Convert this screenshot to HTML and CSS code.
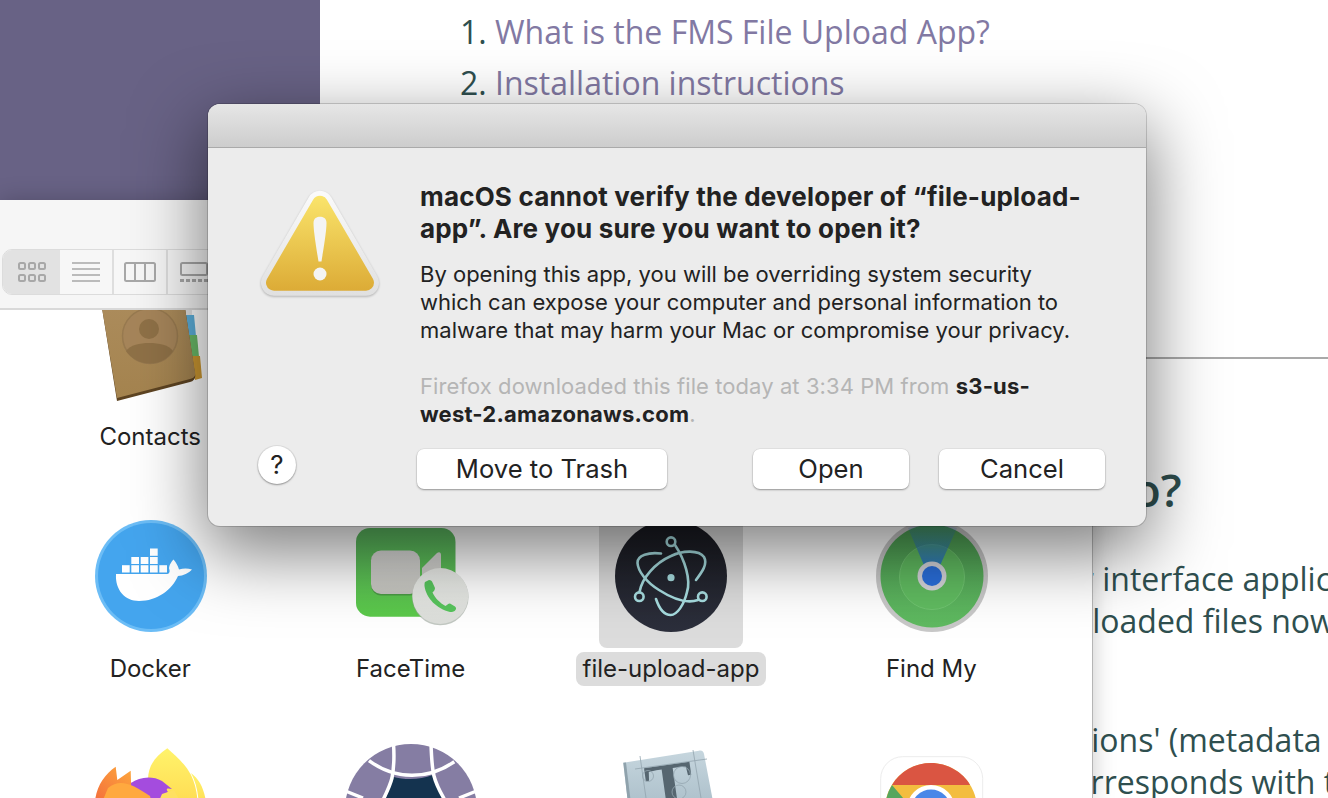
FILE: index.html
```html
<!DOCTYPE html>
<html>
	<head>
		<meta charset="utf-8">
		<title>macOS cannot verify the developer</title>
		<link rel="stylesheet" href="styles.css">
	</head>
	<body>
		<div class="desktop">
			<!-- browser window behind -->
			<div class="page">
				<div class="sidebar"></div>
				<div class="article">
					<ol class="toc">
						<li><a>What is the FMS File Upload App?</a></li>
						<li><a>Installation instructions</a></li>
					</ol>
					<div class="rule"></div>
					<h2>do?</h2>
					<p class="para1">
						<span class="line l1">user interface application</span>
						<span class="line l2">uploaded files now</span>
					</p>
					<p class="para2">
						<span class="line l3">descriptions' (metadata</span>
						<span class="line l4">corresponds with the</span>
					</p>
				</div>
			</div>

			<!-- finder window -->
			<div class="finder">
				<div class="toolbar">
					<div class="segments">
						<div class="seg active">
							<svg width="28" height="20" viewBox="0 0 28 20" fill="none" stroke="#a8a8a8" stroke-width="2"><rect x="1" y="1" width="6" height="6" rx="1.5"/><rect x="11" y="1" width="6" height="6" rx="1.5"/><rect x="21" y="1" width="6" height="6" rx="1.5"/><rect x="1" y="13" width="6" height="6" rx="1.5"/><rect x="11" y="13" width="6" height="6" rx="1.5"/><rect x="21" y="13" width="6" height="6" rx="1.5"/></svg>
						</div>
						<div class="seg">
							<svg width="28" height="20" viewBox="0 0 28 20" stroke="#a8a8a8" stroke-width="1.6"><path d="M0 1H28M0 7H28M0 13H28M0 19H28"/></svg>
						</div>
						<div class="seg">
							<svg width="32" height="20" viewBox="0 0 32 20" fill="none" stroke="#a8a8a8" stroke-width="2"><rect x="1" y="1" width="30" height="18" rx="1.5"/><path d="M11 1V19M21 1V19"/></svg>
						</div>
						<div class="seg">
							<svg width="28" height="20" viewBox="0 0 28 20" fill="none" stroke="#a8a8a8" stroke-width="2"><rect x="1" y="1" width="26" height="12" rx="1.5"/><path d="M0 18.500H28" stroke-width="3" stroke-dasharray="4 2"/></svg>
						</div>
					</div>
				</div>
				<div class="files">
					<div class="file-grid">
						<div class="app">
							<div class="tile">
								<svg class="icon" viewBox="0 0 112 112">
									<defs><linearGradient id="book" x1="0" y1="0" x2="0" y2="1"><stop offset="0" stop-color="#ab8b5b"/><stop offset="1" stop-color="#a5844f"/></linearGradient></defs>
									<rect x="90" y="20" width="8" height="8" fill="#e4e4e4"/>
									<path d="M90 27H100L102 48H92Z" fill="#5db1dd"/>
									<path d="M93 47H103L105 69H96Z" fill="#6cbd6a"/>
									<path d="M96 68H106L108 90L101 92Z" fill="#cf9a32"/>
									<path d="M8 20H91L101 86C102 90 100 93 96 94L23 113Z" fill="#5e4422"/>
									<path d="M8 20H91L101 84C102 88 100 90 96 91L23 110Z" fill="url(#book)"/>
									<circle cx="56" cy="48" r="27.500" fill="#a6855a" stroke="#987a50" stroke-width="1.500"/>
									<circle cx="55" cy="41" r="10" fill="#8f7147"/>
									<path d="M32 63C36 57 46 55 55 55C65 55 75 57 79 63C74 71 65 75.500 56 75.500C47 75.500 37 71 32 63Z" fill="#8f7147"/>
								</svg>
							</div>
							<span class="label">Contacts</span>
						</div>
						<div class="app"></div>
						<div class="app"></div>
						<div class="app"></div>

						<div class="app">
							<div class="tile">
								<svg class="icon" viewBox="-1 0 112 112">
									<circle cx="56" cy="56" r="56" fill="#6cbdf6"/>
									<circle cx="56" cy="56" r="53" fill="#44a5ee"/>
									<g fill="#fff">
										<rect x="55" y="28.500" width="7.700" height="7.300"/>
										<rect x="36.300" y="37" width="7.700" height="7"/>
										<rect x="45.700" y="37" width="7.700" height="7"/>
										<rect x="55" y="37" width="7.700" height="7"/>
										<rect x="27" y="45.200" width="7.700" height="7.300"/>
										<rect x="36.300" y="45.200" width="7.700" height="7.300"/>
										<rect x="45.700" y="45.200" width="7.700" height="7.300"/>
										<rect x="55" y="45.200" width="7.700" height="7.300"/>
										<rect x="64.300" y="45.200" width="7.700" height="7.300"/>
										<path d="M21 54H72C74 54 75 52 74.500 50C73 47 76 42 78.500 39.500C81 42 83 46 84 49.500C88 48 93 48 97 49.500C94 53 88 56 83 56C77 70 62 81 44 81C30 81 20 70 21 54Z"/>
									</g>
								</svg>
							</div>
							<span class="label">Docker</span>
						</div>
						<div class="app">
							<div class="tile">
								<svg class="icon" viewBox="0 0 112 112">
									<defs>
										<linearGradient id="ftGreen" x1="0" y1="0" x2="0" y2="1"><stop offset="0" stop-color="#5cb861"/><stop offset="1" stop-color="#5bc94a"/></linearGradient>
										<linearGradient id="ftCam" x1="0" y1="0" x2="0" y2="1"><stop offset="0" stop-color="#dcdcda"/><stop offset="1" stop-color="#c4c4be"/></linearGradient>
										<linearGradient id="ftDisc" x1="0" y1="0" x2="0" y2="1"><stop offset="0" stop-color="#eceeea"/><stop offset="1" stop-color="#dcdeda"/></linearGradient>
									</defs>
									<rect x="1" y="8" width="99.500" height="88.700" rx="14" fill="url(#ftGreen)"/>
									<rect x="16" y="31.500" width="49" height="44" rx="10" fill="#3f7f3d" opacity=".6"/>
									<rect x="16" y="30.500" width="49" height="43.500" rx="10" fill="url(#ftCam)"/>
									<path d="M67 48L82 33C84 31.500 86 32 86 35V70H67Z" fill="url(#ftCam)"/>
									<circle cx="85.300" cy="77" r="28.300" fill="#9aa39a" opacity=".6"/>
									<circle cx="85.300" cy="76" r="28" fill="url(#ftDisc)"/>
									<path d="M70 62L74 60C76 60 77 61 77.500 62.500L80 68C80 70 79 71 77.500 72.500C80 78 85 83 90.500 86C92 85 93 83.500 95 83.500L100 86.500C101 87.500 101.500 88.500 100.500 90C99.500 91.500 98 92 95 92C82 89 71 78 69.500 66C69.500 64.500 69.500 63 70 62Z" fill="#57c45c"/>
								</svg>
							</div>
							<span class="label">FaceTime</span>
						</div>
						<div class="app selected">
							<div class="tile">
								<svg class="icon" viewBox="0 0 112 112">
									<defs><linearGradient id="elec" x1="0" y1="0" x2="0" y2="1"><stop offset="0" stop-color="#191a20"/><stop offset="1" stop-color="#2c2f3c"/></linearGradient></defs>
									<circle cx="56" cy="56" r="56" fill="url(#elec)"/>
									<g fill="none" stroke="#a7dde0" stroke-width="2.600" stroke-linecap="round">
										<path d="M60 25C70 40 76 60 72 72C69 85 62 95 55.700 95C49 95 44 88 41 79"/>
										<path d="M46 33.500C34 32 22 35 22.500 43C23 51 31 62 44 70C58 79 72 84 83 80"/>
										<path d="M24.500 72C27 58 40 43 56 36C68 30 84 30 89 37C93 44 87 52 81 60"/>
										<circle cx="56" cy="21.700" r="4.300"/>
										<circle cx="24.300" cy="76.700" r="4.300"/>
										<circle cx="87.300" cy="76.700" r="4.300"/>
									</g>
									<circle cx="56" cy="57.700" r="3.600" fill="#a7dde0"/>
								</svg>
							</div>
							<span class="label">file-upload-app</span>
						</div>
						<div class="app">
							<div class="tile">
								<svg class="icon" viewBox="-1 0 112 112">
									<defs>
										<linearGradient id="fmGreen" x1="0" y1="0" x2="0" y2="1"><stop offset="0" stop-color="#4f9f55"/><stop offset="1" stop-color="#5fba60"/></linearGradient>
										<linearGradient id="fmBeam" x1="0" y1="0" x2="0" y2="1"><stop offset="0" stop-color="#2a74c5" stop-opacity=".1"/><stop offset="1" stop-color="#2a74c5"/></linearGradient>
									</defs>
									<circle cx="56" cy="56" r="56" fill="#c8c8c8"/>
									<circle cx="56" cy="56" r="51.500" fill="url(#fmGreen)"/>
									<circle cx="56" cy="57" r="32.500" fill="#60bb60" stroke="#70c470" stroke-width="1"/>
									<path d="M32 8C47 2 65 2 81 8L62 50H50Z" fill="url(#fmBeam)"/>
									<circle cx="56" cy="56" r="14.500" fill="#d4d4da"/>
									<circle cx="56" cy="56" r="10" fill="#2a6fdc"/>
								</svg>
							</div>
							<span class="label">Find My</span>
						</div>

						<div class="app">
							<div class="tile">
								<svg class="icon" viewBox="0 0 112 112">
									<defs>
										<linearGradient id="ffYellow" x1="0" y1="0" x2="0" y2="1"><stop offset="0" stop-color="#fff36b"/><stop offset="1" stop-color="#ffd84f"/></linearGradient>
										<linearGradient id="ffOrange" x1="1" y1="0" x2="0" y2="1"><stop offset="0" stop-color="#ffb13c"/><stop offset="1" stop-color="#f2663c"/></linearGradient>
									</defs>
									<path d="M73.300 -3.700C60 5 54 15 54 28L58 60H104C104 45 102 33 97 23C92 13 82 4 73.300 -3.700Z" fill="url(#ffYellow)"/>
									<path d="M97 21C105 27 110 36 112 50L105 60C105 45 103 32 97 21Z" fill="url(#ffYellow)"/>
									<path d="M1 60C-1 40 8 24 21.700 14.700L23.300 28L36.700 18.700L37 30L50 60Z" fill="url(#ffOrange)"/>
									<path d="M37 31C45 25 58 23 68 29L78 37C72 35.500 72 37 74 40L50 60H38Z" fill="#a44cde"/>
									<path d="M14 36C26 26 38 32 56 44L60 60H4Z" fill="#ffa93f"/>
									<path d="M68 42L80 38L92 60H60Z" fill="#ffe061"/>
								</svg>
							</div>
						</div>
						<div class="app">
							<div class="tile">
								<svg class="icon" viewBox="0 0 112 112">
									<circle cx="56" cy="58" r="66" fill="#857da3"/>
									<path d="M31 46L37.700 24.700C50 28 65 28 77.700 23L88 46V70H31Z" fill="#14334f"/>
									<g fill="none" stroke="#fff" stroke-width="3.500">
										<path d="M14 8.700C40 28 73 28 99.300 9.700"/>
										<path d="M38.500 -8C39.500 6 38.500 18 37 26C35 34 32 40 27 50"/>
										<path d="M76 -8C76.500 6 77 16 79 24C81 32 85 40 91 50"/>
										<path d="M-12 38L8 46"/>
										<path d="M124 38L104 46"/>
									</g>
								</svg>
							</div>
						</div>
						<div class="app">
							<div class="tile">
								<svg class="icon" viewBox="0 0 112 112">
									<defs><linearGradient id="fb" x1="0" y1="0" x2="0" y2="1"><stop offset="0" stop-color="#c6d6de"/><stop offset="1" stop-color="#a9bdc8"/></linearGradient></defs>
									<path d="M8.300 10.700L84 -1.300C87 -2 88.800 0 89 2L100 60H14Z" fill="url(#fb)"/>
									<path d="M8.300 10.700L11 10.500L17 60H14Z" fill="#8fa2ac"/>
									<text class="font-t" x="54" y="60" transform="rotate(-8 54 30)">T</text>
									<g fill="none" stroke="#93a5af" stroke-width=".8">
										<circle cx="33" cy="24" r="5.500"/>
										<circle cx="67" cy="23" r="8.500"/>
										<circle cx="64" cy="40" r="7"/>
										<path d="M20 17L92 7M25 4L31 46M78 -2L86 46"/>
									</g>
								</svg>
							</div>
						</div>
						<div class="app">
							<div class="tile">
								<svg class="icon" viewBox="0 0 112 112">
									<rect x="5.700" y="4.700" width="102" height="102" rx="22" fill="#fff" stroke="#ececec"/>
									<circle cx="56" cy="57" r="46" fill="#f3bd3f"/>
									<path d="M17 33C25 19 40 11 56 11C72 11 88 20 95 33H56Z" fill="#da5542"/>
									<path d="M17 33C9 46 8 62 14 73L40 60Z" fill="#56a65e"/>
									<circle cx="56" cy="57" r="24" fill="#fff"/>
									<circle cx="56" cy="57" r="19.500" fill="#4a87e8"/>
								</svg>
							</div>
						</div>
					</div>
				</div>
			</div>

			<!-- dialog -->
			<div class="dialog">
				<div class="titlebar"></div>
				<div class="dialog-body">
					<svg class="warn" width="118" height="108" viewBox="0 0 118 108">
						<defs>
							<linearGradient id="warnEdge" gradientUnits="userSpaceOnUse" x1="0" y1="0" x2="0" y2="106"><stop offset="0" stop-color="#fbfbfb"/><stop offset="1" stop-color="#e0e0e0"/></linearGradient>
							<linearGradient id="warnFill" gradientUnits="userSpaceOnUse" x1="0" y1="6" x2="0" y2="101"><stop offset="0" stop-color="#fae46b"/><stop offset="1" stop-color="#dcab36"/></linearGradient>
						</defs>
						<path d="M59 13.700L13 92.700H105Z" fill="url(#warnEdge)" stroke="url(#warnEdge)" stroke-width="26" stroke-linejoin="round"/>
						<path d="M59 13.700L13 92.700H105Z" fill="url(#warnFill)" stroke="url(#warnFill)" stroke-width="16" stroke-linejoin="round"/>
						<path d="M52.500 33C52.500 28 56 26.700 59 26.700C62 26.700 65.500 28 65.500 33C65.500 42 62 62 60.500 71.500H57.500C56 62 52.500 42 52.500 33Z" fill="#f4f4f4"/>
						<circle cx="59" cy="84" r="6.500" fill="#f4f4f4"/>
					</svg>
					<div class="dialog-text">
						<h1>macOS cannot verify the developer of “file-upload-<br>app”. Are you sure you want to open it?</h1>
						<p class="msg">By opening this app, you will be overriding system security<br>which can expose your computer and personal information to<br>malware that may harm your Mac or compromise your privacy.</p>
						<p class="source">Firefox downloaded this file today at 3:34 PM from <b>s3-us-<br>west-2.amazonaws.com</b>.</p>
					</div>
				</div>
				<div class="dialog-foot">
					<div class="help">?</div>
					<div class="btn trash">Move to Trash</div>
					<div class="btn open">Open</div>
					<div class="btn cancel">Cancel</div>
				</div>
			</div>
		</div>
	</body>
</html>
```

FILE: styles.css
```css
* {
	margin: 0;
	padding: 0;
	box-sizing: border-box;
}
body {
	font-family: "Inter", "Liberation Sans", sans-serif;
	color: #222;
	background: #fff;
}
.desktop {
	width: 1328px;
	height: 798px;
	position: relative;
	overflow: hidden;
	background: #fff;
}

/* browser page */
.page {
	position: absolute;
	left: 0;
	top: 0;
	width: 1328px;
	height: 798px;
	display: flex;
	font-family: "Open Sans", "Noto Sans", sans-serif;
	color: #2f4f4f;
}
.sidebar {
	width: 320px;
	height: 200px;
	flex-shrink: 0;
	background: #686285;
}
.article {
	flex: 1;
	white-space: nowrap;
	overflow: hidden;
}
.toc {
	list-style: decimal;
	font-size: 32px;
	line-height: 51px;
	padding: 6px 0 0 175px;
}
.toc a {
	color: #8279a3;
}
.rule {
	height: 2px;
	background: #a9a9a9;
	margin-top: 249px;
}
.article h2 {
	font-size: 46px;
	font-weight: 600;
	line-height: 60px;
	margin: 100px 0 0 784px;
}
.para1 {
	margin-top: 39px;
}
.para2 {
	margin-top: 77px;
}
.line {
	display: block;
	font-size: 32px;
	line-height: 42px;
}
.l1 {
	margin-left: 708px;
}
.l2 {
	margin-left: 733px;
}
.l3 {
	margin-left: 651px;
}
.l4 {
	margin-left: 736px;
}

/* finder */
.finder {
	position: absolute;
	left: 0;
	top: 200px;
	width: 1093px;
	height: 598px;
	background: #fff;
	border-right: 1px solid #b5b5b5;
	box-shadow: 0 0 22px rgba(0, 0, 0, 0.22);
	display: flex;
	flex-direction: column;
}
.toolbar {
	height: 110px;
	padding: 49px 0 0 2px;
	background: #f6f6f6;
	border-bottom: 2px solid #d9d9d9;
	flex-shrink: 0;
}
.segments {
	display: flex;
	width: 260px;
	height: 46px;
	border: 1px solid #dcdcdc;
	border-radius: 10px;
	background: #f7f7f7;
	overflow: hidden;
}
.seg {
	width: 54px;
	display: flex;
	align-items: center;
	justify-content: center;
	border-right: 2px solid #dedede;
}
.seg.active {
	width: 57px;
	background: #e2e2e2;
	border-right: none;
}
.files {
	flex: 1;
	overflow: hidden;
}
.file-grid {
	display: grid;
	grid-template-columns: repeat(4, 260.4px);
	grid-auto-rows: 182px;
	row-gap: 50px;
	padding-left: 20px;
	margin-top: -38px;
}
.app {
	display: flex;
	flex-direction: column;
	align-items: center;
	gap: 4px;
}
.tile {
	width: 144px;
	height: 144px;
	display: flex;
	align-items: center;
	justify-content: center;
	border-radius: 8px;
}
.icon {
	width: 112px;
	height: 112px;
	overflow: visible;
	flex-shrink: 0;
}
.label {
	font-size: 24px;
	line-height: 34px;
	padding: 0 7px;
	border-radius: 8px;
	color: #222;
}
.selected .tile,
.selected .label {
	background: #dcdcdc;
}
.font-t {
	font-family: "Liberation Serif", serif;
	font-size: 72px;
	font-weight: bold;
	text-anchor: middle;
	fill: #566670;
}

/* dialog */
.dialog {
	position: absolute;
	left: 208px;
	top: 104px;
	width: 938px;
	height: 422px;
	background: #ececec;
	border-radius: 12px;
	box-shadow: 0 0 0 1px rgba(0, 0, 0, 0.16), 0 24px 70px 4px rgba(0, 0, 0, 0.5);
}
.titlebar {
	height: 44px;
	border-radius: 12px 12px 0 0;
	background: linear-gradient(#e6e6e6, #cdcdcd);
	border-bottom: 1px solid #aaa;
}
.dialog-body {
	display: flex;
	padding: 33px 41px 0 53px;
}
.warn {
	margin: 9px 41px 0 0;
	flex-shrink: 0;
	filter: drop-shadow(0 1px 1px rgba(0, 0, 0, 0.25));
}
.dialog-text {
	white-space: nowrap;
}
.dialog-text h1 {
	font-size: 26px;
	font-weight: 700;
	line-height: 32px;
	letter-spacing: 0.18px;
	color: #222;
}
.msg {
	font-size: 22px;
	line-height: 28px;
	margin-top: 15px;
}
.source {
	font-size: 22px;
	line-height: 28px;
	margin-top: 28px;
	letter-spacing: 0.08px;
	color: #b5b5b5;
}
.source b {
	letter-spacing: 0.2px;
	color: #222;
}
.dialog-foot {
	display: flex;
	align-items: flex-start;
	padding: 18px 41px 0 50px;
}
.help {
	width: 38px;
	height: 38px;
	border-radius: 50%;
	background: #fff;
	box-shadow: 0 1px 2px rgba(0, 0, 0, 0.35), 0 0 0 1px rgba(0, 0, 0, 0.06);
	text-align: center;
	font-size: 26px;
	line-height: 38px;
}
.btn {
	height: 40px;
	margin-top: 3px;
	background: #fff;
	border-radius: 7px;
	box-shadow: 0 1px 2px rgba(0, 0, 0, 0.35), 0 0 0 0.5px rgba(0, 0, 0, 0.07);
	text-align: center;
	font-size: 25.6px;
	line-height: 40px;
}
.trash {
	width: 250px;
	margin-left: 121px;
}
.open {
	width: 156px;
	margin-left: 86px;
}
.cancel {
	width: 166px;
	margin-left: 30px;
}
```
